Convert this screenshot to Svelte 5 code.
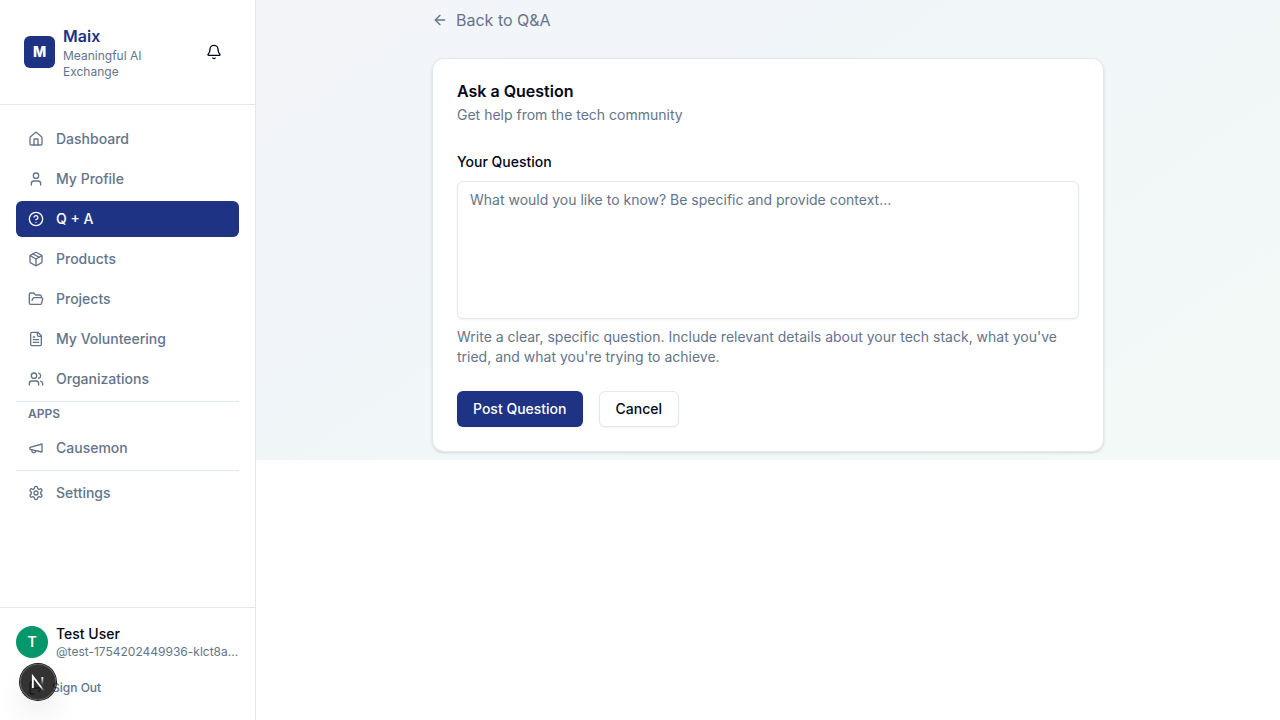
<script>
  const mainLinks = [
    { label: 'Dashboard', icon: 'home' },
    { label: 'My Profile', icon: 'user' },
    { label: 'Q + A', icon: 'help', active: true },
    { label: 'Products', icon: 'box' },
    { label: 'Projects', icon: 'folder' },
    { label: 'My Volunteering', icon: 'file' },
    { label: 'Organizations', icon: 'users' }
  ];

  const icons = {
    home: ['M15 21v-8a1 1 0 0 0-1-1h-4a1 1 0 0 0-1 1v8', 'M3 10a2 2 0 0 1 .709-1.528l7-5.999a2 2 0 0 1 2.582 0l7 5.999A2 2 0 0 1 21 10v9a2 2 0 0 1-2 2H5a2 2 0 0 1-2-2z'],
    user: ['M19 21v-2a4 4 0 0 0-4-4H9a4 4 0 0 0-4 4v2', 'M8 7a4 4 0 1 0 8 0a4 4 0 1 0-8 0'],
    help: ['M2 12a10 10 0 1 0 20 0a10 10 0 1 0-20 0', 'M9.09 9a3 3 0 0 1 5.83 1c0 2-3 3-3 3', 'M12 17h.01'],
    box: ['M11 21.73a2 2 0 0 0 2 0l7-4A2 2 0 0 0 21 16V8a2 2 0 0 0-1-1.73l-7-4a2 2 0 0 0-2 0l-7 4A2 2 0 0 0 3 8v8a2 2 0 0 0 1 1.73z', 'M12 22V12', 'M3.29 7 12 12l8.71-5', 'm7.5 4.27 9 5.15'],
    folder: ['m6 14 1.5-2.9A2 2 0 0 1 9.24 10H20a2 2 0 0 1 1.94 2.5l-1.54 6a2 2 0 0 1-1.95 1.5H4a2 2 0 0 1-2-2V5a2 2 0 0 1 2-2h3.9a2 2 0 0 1 1.69.9l.81 1.2a2 2 0 0 0 1.67.9H18a2 2 0 0 1 2 2v2'],
    file: ['M15 2H6a2 2 0 0 0-2 2v16a2 2 0 0 0 2 2h12a2 2 0 0 0 2-2V7Z', 'M14 2v4a2 2 0 0 0 2 2h4', 'M10 9H8', 'M16 13H8', 'M16 17H8'],
    users: ['M16 21v-2a4 4 0 0 0-4-4H6a4 4 0 0 0-4 4v2', 'M5 7a4 4 0 1 0 8 0a4 4 0 1 0-8 0', 'M22 21v-2a4 4 0 0 0-3-3.87', 'M16 3.13a4 4 0 0 1 0 7.75'],
    megaphone: ['m3 11 18-5v12L3 14v-3z', 'M11.6 16.8a3 3 0 1 1-5.8-1.6'],
    settings: ['M12.22 2h-.44a2 2 0 0 0-2 2v.18a2 2 0 0 1-1 1.73l-.43.25a2 2 0 0 1-2 0l-.15-.08a2 2 0 0 0-2.73.73l-.22.38a2 2 0 0 0 .73 2.73l.15.1a2 2 0 0 1 1 1.72v.51a2 2 0 0 1-1 1.74l-.15.09a2 2 0 0 0-.73 2.73l.22.38a2 2 0 0 0 2.73.73l.15-.08a2 2 0 0 1 2 0l.43.25a2 2 0 0 1 1 1.73V20a2 2 0 0 0 2 2h.44a2 2 0 0 0 2-2v-.18a2 2 0 0 1 1-1.73l.43-.25a2 2 0 0 1 2 0l.15.08a2 2 0 0 0 2.73-.73l.22-.39a2 2 0 0 0-.73-2.73l-.15-.08a2 2 0 0 1-1-1.74v-.5a2 2 0 0 1 1-1.74l.15-.09a2 2 0 0 0 .73-2.73l-.22-.38a2 2 0 0 0-2.73-.73l-.15.08a2 2 0 0 1-2 0l-.43-.25a2 2 0 0 1-1-1.73V4a2 2 0 0 0-2-2z', 'M9 12a3 3 0 1 0 6 0a3 3 0 1 0-6 0'],
    bell: ['M10.268 21a2 2 0 0 0 3.464 0', 'M3.262 15.326A1 1 0 0 0 4 17h16a1 1 0 0 0 .74-1.673C19.41 13.956 18 12.499 18 8A6 6 0 0 0 6 8c0 4.499-1.411 5.956-2.738 7.326'],
    back: ['m12 19-7-7 7-7', 'M19 12H5'],
    logout: ['M9 21H5a2 2 0 0 1-2-2V5a2 2 0 0 1 2-2h4', 'm16 17 5-5-5-5', 'M21 12H9']
  };

  let question = $state('');
</script>

{#snippet icon(name)}
  <svg class="icon" viewBox="0 0 24 24" aria-hidden="true">
    {#each icons[name] as d}<path {d} />{/each}
  </svg>
{/snippet}

{#snippet navLink(link)}
  <a class="nav-link" class:active={link.active} href="#top" aria-current={link.active ? 'page' : undefined}>
    {@render icon(link.icon)}
    <span>{link.label}</span>
  </a>
{/snippet}

<div class="layout">
  <aside class="sidebar">
    <header class="brand">
      <div class="logo">M</div>
      <div class="brand-text">
        <div class="brand-name">Maix</div>
        <div class="small">Meaningful AI Exchange</div>
      </div>
      <button class="bell" type="button" aria-label="Notifications">{@render icon('bell')}</button>
    </header>

    <nav class="nav">
      {#each mainLinks as link}{@render navLink(link)}{/each}
      <hr />
      <div class="section-title">APPS</div>
      {@render navLink({ label: 'Causemon', icon: 'megaphone' })}
      <hr />
      {@render navLink({ label: 'Settings', icon: 'settings' })}
    </nav>

    <footer class="account">
      <div class="account-row">
        <div class="avatar">T</div>
        <div class="account-text">
          <div class="account-name">Test User</div>
          <div class="small handle">@test-1754202449936-klct8ab2x</div>
        </div>
      </div>
      <button class="sign-out" type="button">
        {@render icon('logout')}
        <span>Sign Out</span>
      </button>
    </footer>
  </aside>

  <main class="content">
    <div class="column">
      <a class="back" href="#top">{@render icon('back')}<span>Back to Q&amp;A</span></a>

      <section class="card">
        <div class="card-header">
          <h1>Ask a Question</h1>
          <p class="muted">Get help from the tech community</p>
        </div>
        <form onsubmit={(e) => e.preventDefault()}>
          <div class="field-label"><label for="question">Your Question</label></div>
          <textarea
            id="question"
            rows="6"
            aria-describedby="question-help"
            placeholder="What would you like to know? Be specific and provide context..."
            bind:value={question}
          ></textarea>
          <p class="muted help" id="question-help">
            Write a clear, specific question. Include relevant details about your tech stack, what you've tried, and
            what you're trying to achieve.
          </p>
          <div class="actions">
            <button class="button primary" type="submit">Post Question</button>
            <button class="button outline" type="button">Cancel</button>
          </div>
        </form>
      </section>
    </div>
  </main>
</div>

<button class="dev-badge" type="button" aria-label="Open developer tools">
  <svg viewBox="0 0 36 36" fill="none" aria-hidden="true">
    <g transform="translate(10.5 11.5)">
      <path d="M13.3 15.2 L2.34 1 V12.6" stroke="url(#fade-diagonal)" stroke-width="1.86" />
      <path d="M11.825 1.5 V13.1" stroke="url(#fade-stem)" stroke-width="1.86" />
    </g>
    <defs>
      <linearGradient id="fade-diagonal" x1="9.95555" y1="11.1226" x2="15.4778" y2="17.9671" gradientUnits="userSpaceOnUse">
        <stop stop-color="white" />
        <stop offset="0.604" stop-color="white" stop-opacity="0" />
        <stop offset="1" stop-color="white" stop-opacity="0" />
      </linearGradient>
      <linearGradient id="fade-stem" x1="11.8222" y1="1.40039" x2="11.791" y2="9.62542" gradientUnits="userSpaceOnUse">
        <stop stop-color="white" />
        <stop offset="1" stop-color="white" stop-opacity="0" />
      </linearGradient>
    </defs>
  </svg>
</button>

<style>
  :global(body) {
    margin: 0;
    background: #fff;
    color: #020817;
    font-family: Inter, sans-serif;
    font-size: 16px;
    line-height: 24px;
    -webkit-font-smoothing: antialiased;
  }

  .layout,
  .layout :global(*) {
    box-sizing: border-box;
  }

  .layout {
    display: flex;
    align-items: flex-start;
    min-height: 100vh;
  }

  button,
  textarea {
    font-family: inherit;
  }

  button {
    border: 0;
    background: none;
    color: inherit;
    cursor: pointer;
  }

  a {
    color: inherit;
    text-decoration: none;
  }

  h1,
  p {
    margin: 0;
  }

  .icon {
    flex: none;
    display: block;
    width: 16px;
    height: 16px;
    fill: none;
    stroke: currentColor;
    stroke-width: 2;
    stroke-linecap: round;
    stroke-linejoin: round;
  }

  .small {
    color: #64748b;
    font-size: 12px;
    line-height: 16px;
  }

  .sidebar {
    position: sticky;
    top: 0;
    flex: none;
    display: flex;
    flex-direction: column;
    width: 256px;
    height: 100vh;
    border-right: 1px solid #e2e8f0;
    background: #fff;
  }

  .brand {
    display: flex;
    align-items: center;
    gap: 8px;
    padding: 24px;
    border-bottom: 1px solid #e2e8f0;
  }

  .logo {
    flex: none;
    display: grid;
    place-items: center;
    width: 31px;
    height: 32px;
    border-radius: 6px;
    background: #1e3384;
    color: #fff;
    font-size: 14px;
    font-weight: 800;
    line-height: 20px;
  }

  .brand-text {
    flex: 1;
    min-width: 0;
  }

  .brand-name {
    color: #1e3384;
    font-weight: 600;
  }

  .bell {
    flex: none;
    padding: 8px 9px;
  }

  .nav {
    flex: 1;
    display: flex;
    flex-direction: column;
    gap: 4px;
    padding: 16px;
  }

  .nav-link {
    display: flex;
    align-items: center;
    gap: 12px;
    padding: 8px 12px;
    border-radius: 6px;
    color: #64748b;
    font-size: 14px;
    font-weight: 500;
    line-height: 20px;
  }

  .nav-link.active {
    background: #1e3384;
    color: #fff;
  }

  hr {
    width: 100%;
    height: 1px;
    margin: 0;
    border: 0;
    background: #e2e8f0;
  }

  .section-title {
    padding: 0 12px 4px;
    color: #64748b;
    font-size: 12px;
    font-weight: 600;
    line-height: 16px;
  }

  .account {
    display: flex;
    flex-direction: column;
    gap: 12px;
    padding: 16px;
    border-top: 1px solid #e2e8f0;
  }

  .account-row {
    display: flex;
    align-items: center;
    gap: 8px;
  }

  .avatar {
    flex: none;
    display: grid;
    place-items: center;
    width: 32px;
    height: 32px;
    border-radius: 50%;
    background: #059669;
    color: #fff;
    font-size: 14px;
    font-weight: 600;
    line-height: 20px;
  }

  .account-text {
    min-width: 0;
  }

  .account-name {
    font-size: 14px;
    font-weight: 500;
    line-height: 20px;
  }

  .handle {
    overflow: hidden;
    text-overflow: ellipsis;
    white-space: nowrap;
  }

  .sign-out {
    display: flex;
    align-items: center;
    gap: 8px;
    height: 32px;
    padding: 0 12px;
    color: #64748b;
    font-size: 12px;
    font-weight: 500;
    line-height: 16px;
  }

  .content {
    flex: 1;
    min-width: 0;
    padding: 8px 16px;
    background: linear-gradient(to bottom right, #f5f4f8, #f1f5f9 42%, #f2f9f7 90%) bottom / 100% 720px;
  }

  .column {
    max-width: 672px;
    margin: 0 auto;
  }

  .back {
    display: flex;
    align-items: center;
    gap: 8px;
    width: fit-content;
    margin-bottom: 26px;
    color: #64748b;
  }

  .card {
    padding: 24px;
    border: 1px solid #e2e8f0;
    border-radius: 12px;
    background: #fff;
    box-shadow: 0 1px 3px rgb(0 0 0 / 0.1), 0 1px 2px -1px rgb(0 0 0 / 0.1);
  }

  .card-header {
    display: flex;
    flex-direction: column;
    gap: 6px;
    padding-bottom: 24px;
  }

  h1 {
    font-size: 16px;
    font-weight: 600;
    line-height: 16px;
  }

  .muted {
    color: #64748b;
    font-size: 14px;
    line-height: 20px;
  }

  .field-label {
    margin-bottom: 8px;
  }

  label {
    font-size: 14px;
    font-weight: 500;
    line-height: 14px;
  }

  textarea {
    display: block;
    width: 100%;
    margin: 0;
    padding: 8px 12px;
    border: 1px solid #e2e8f0;
    border-radius: 6px;
    background: #fff;
    box-shadow: 0 1px 2px rgb(0 0 0 / 0.05);
    color: inherit;
    font-size: 14px;
    line-height: 20px;
    resize: none;
  }

  textarea::placeholder {
    color: #64748b;
    opacity: 1;
  }

  .help {
    margin-top: 8px;
  }

  .actions {
    display: flex;
    gap: 16px;
    margin-top: 24px;
  }

  .button {
    height: 36px;
    padding: 0 16px;
    border-radius: 6px;
    box-shadow: 0 1px 2px rgb(0 0 0 / 0.05);
    font-size: 14px;
    font-weight: 500;
    line-height: 20px;
  }

  .primary {
    background: #1e3384;
    color: #fff;
  }

  .outline {
    border: 1px solid #e2e8f0;
    background: #fff;
  }

  .dev-badge {
    position: fixed;
    bottom: 20px;
    left: 20px;
    width: 36px;
    height: 36px;
    padding: 0;
    border-radius: 50%;
    background: rgb(0 0 0 / 0.8);
    box-shadow:
      0 0 0 1px #171717,
      inset 0 0 0 1px rgb(255 255 255 / 0.14),
      0 16px 32px -8px rgb(0 0 0 / 0.24);
  }

  .dev-badge svg {
    display: block;
    width: 36px;
    height: 36px;
  }
</style>
